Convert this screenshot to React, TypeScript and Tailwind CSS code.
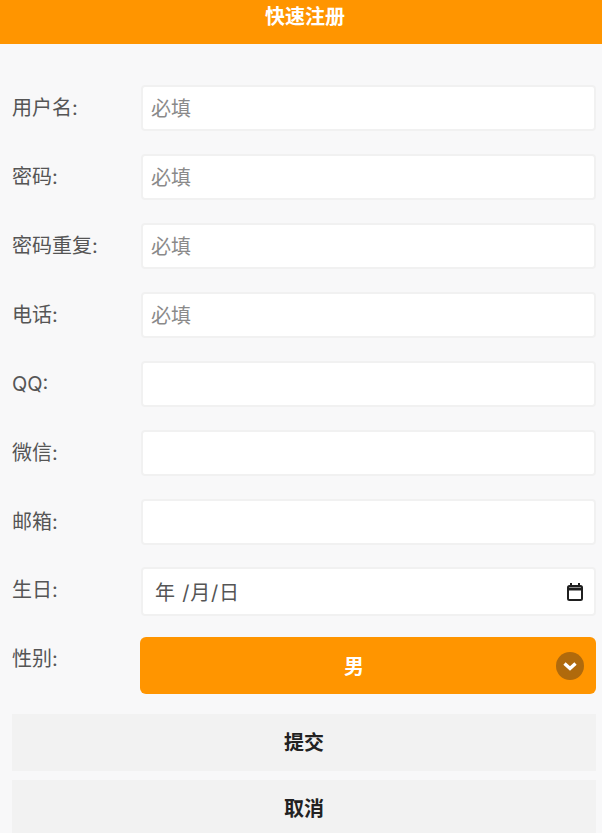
import * as React from "react";

const fields = [
  { label: "用户名:", placeholder: "必填" },
  { label: "密码:", placeholder: "必填" },
  { label: "密码重复:", placeholder: "必填" },
  { label: "电话:", placeholder: "必填" },
  { label: "QQ:", placeholder: "" },
  { label: "微信:", placeholder: "" },
  { label: "邮箱:", placeholder: "" },
];

const font = "font-['Inter','Noto_Sans_CJK_SC',sans-serif]";

function FormRow({ label, placeholder }: { label: string; placeholder: string }) {
  return (
    <div className="flex h-[46px] mb-[23px]">
      <label className="w-[129px] pt-[10px] text-[20px] leading-[26px] text-[#555]">{label}</label>
      <input
        type="text"
        placeholder={placeholder}
        className="w-[455px] h-[46px] rounded-[4px] border-2 border-[#f1f1f1] bg-white px-2 pt-[2px] text-[20px] text-[#555] outline-none placeholder:text-[#8a8a8a]"
      />
    </div>
  );
}

export default function App() {
  return (
    <div className={`h-[833px] w-[602px] overflow-hidden bg-[#f8f8f9] ${font}`}>
      <header className="h-[44px] bg-[#ff9500] pt-[4px] pl-[8px] text-center text-[20px] leading-[26px] font-bold text-white">
        快速注册
      </header>
      <form className="pt-[41px] pr-[6px] pl-[12px]">
        {fields.map((field) => (
          <FormRow key={field.label} label={field.label} placeholder={field.placeholder} />
        ))}

        <div className="flex h-[49px] mt-[-1px] mb-[21px]">
          <label className="w-[129px] pt-[10px] text-[20px] leading-[26px] text-[#555]">生日:</label>
          <div className="flex w-[455px] items-center justify-between rounded-[4px] border-2 border-[#f1f1f1] bg-white pr-[11px] pl-[12px]">
            <span className="pt-[3px] text-[20px] tracking-[0.8px] text-[#555]">年 /月/日</span>
            <svg width="16" height="18" viewBox="0 0 16 18" fill="none">
              <path d="M4 0v3M12 0v3" stroke="#1f1f1f" strokeWidth="2" />
              <rect x="1" y="3" width="14" height="14" rx="1.5" stroke="#1f1f1f" strokeWidth="2" />
              <path d="M1 6h14" stroke="#1f1f1f" strokeWidth="3" />
            </svg>
          </div>
        </div>

        <div className="flex h-[57px] mb-[20px]">
          <label className="w-[128px] pt-[9px] text-[20px] leading-[26px] text-[#555]">性别:</label>
          <div className="relative flex w-[457px] items-center justify-center rounded-[6px] bg-[#ff9500] pt-[2px] pr-[28px] text-[20px] font-bold text-white">
            男
            <span className="absolute top-[15px] right-[12px] flex h-[28px] w-[28px] items-center justify-center rounded-full bg-[#b06a0c]">
              <svg width="18" height="18" viewBox="0 0 18 18" fill="none">
                <path d="M3.5 6.5l5.5 5 5.5-5" stroke="#fff" strokeWidth="3.4" />
              </svg>
            </span>
          </div>
        </div>

        <button type="button" className="mb-[9px] block h-[57px] w-[584px] bg-[#f2f2f2] text-[20px] font-bold text-[#222]">
          提交
        </button>
        <button type="button" className="block h-[57px] w-[584px] bg-[#f2f2f2] text-[20px] font-bold text-[#222]">
          取消
        </button>
      </form>
    </div>
  );
}
